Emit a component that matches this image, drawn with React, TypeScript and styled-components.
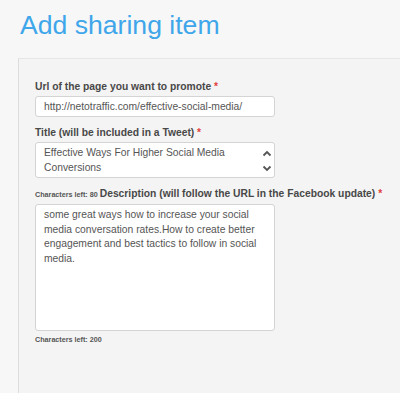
import * as React from 'react';
import styled, { createGlobalStyle } from 'styled-components';

const GlobalStyle = createGlobalStyle`
  html, body {
    margin: 0;
    padding: 0;
    background: #f7f7f7;
    font-family: "Liberation Sans", Arial, sans-serif;
    overflow: hidden;
  }
`;

const Page = styled.div`
  width: 400px;
  height: 393px;
  overflow: hidden;
`;

const Heading = styled.h1`
  margin: 0;
  padding: 9px 0 0 20px;
  font-size: 26.6px;
  line-height: 32px;
  font-weight: normal;
  color: #3fa6ea;
`;

const Panel = styled.section`
  margin: 17px 0 0 18px;
  padding: 21px 0 60px 16px;
  width: 420px;
  background: #f4f4f4;
  border-top: 1px solid #e6e6e6;
  border-left: 1px solid #dddddd;
  display: flex;
  flex-direction: column;
`;

const Label = styled.label<{ $gap?: number }>`
  display: block;
  margin-top: ${(p) => p.$gap ?? 0}px;
  margin-bottom: 2px;
  font-size: 10.3px;
  line-height: 14px;
  font-weight: bold;
  color: #484848;
  white-space: nowrap;
`;

const Star = styled.span`
  color: #e2403a;
`;

const Counter = styled.span`
  font-size: 7.2px;
  font-weight: bold;
  color: #555;
  margin-right: 2px;
`;

const Footnote = styled.div`
  margin-top: 3px;
  font-size: 7.2px;
  line-height: 12px;
  font-weight: bold;
  color: #555;
`;

const Field = styled.div<{ $height: number }>`
  box-sizing: border-box;
  width: 240px;
  height: ${(p) => p.$height}px;
  background: #fff;
  border: 1px solid #d4d4d4;
  border-radius: 3px;
  display: flex;
  overflow: hidden;
`;

const TextInput = styled.input`
  flex: 1;
  min-width: 0;
  border: none;
  outline: none;
  padding: 0 0 0 8px;
  background: transparent;
  font-family: inherit;
  font-size: 10.3px;
  color: #555;
`;

const TextArea = styled.textarea`
  flex: 1;
  min-width: 0;
  border: none;
  outline: none;
  resize: none;
  overflow: hidden;
  padding: 3px 4px 0 8px;
  background: transparent;
  font-family: inherit;
  font-size: 10.3px;
  line-height: 14.6px;
  color: #555;
`;

const ScrollColumn = styled.div`
  width: 14px;
  display: flex;
  flex-direction: column;
  justify-content: space-between;
  align-items: center;
  padding: 7px 0 5px;
`;

const Chevron = ({ up }: { up?: boolean }) => (
  <svg width="10" height="7" viewBox="0 0 10 7">
    <path
      d={up ? 'M1.5 5.5 L5 2 L8.5 5.5' : 'M1.5 1.5 L5 5 L8.5 1.5'}
      fill="none"
      stroke="#555"
      strokeWidth="1.8"
    />
  </svg>
);

export default function App() {
  return (
    <Page>
      <GlobalStyle />
      <Heading>Add sharing item</Heading>
      <Panel>
        <Label>
          Url of the page you want to promote <Star>*</Star>
        </Label>
        <Field $height={21}>
          <TextInput readOnly value="http://netotraffic.com/effective-social-media/" />
        </Field>

        <Label $gap={9}>
          Title (will be included in a Tweet) <Star>*</Star>
        </Label>
        <Field $height={36}>
          <TextArea readOnly value="Effective Ways For Higher Social Media Conversions" />
          <ScrollColumn>
            <Chevron up />
            <Chevron />
          </ScrollColumn>
        </Field>

        <Label $gap={9}>
          <Counter>Characters left: 80</Counter>
          Description (will follow the URL in the Facebook update) <Star>*</Star>
        </Label>
        <Field $height={127}>
          <TextArea
            readOnly
            value="some great ways how to increase your social media conversation rates.How to create better engagement and best tactics to follow in social media."
          />
        </Field>
        <Footnote>Characters left: 200</Footnote>
      </Panel>
    </Page>
  );
}
